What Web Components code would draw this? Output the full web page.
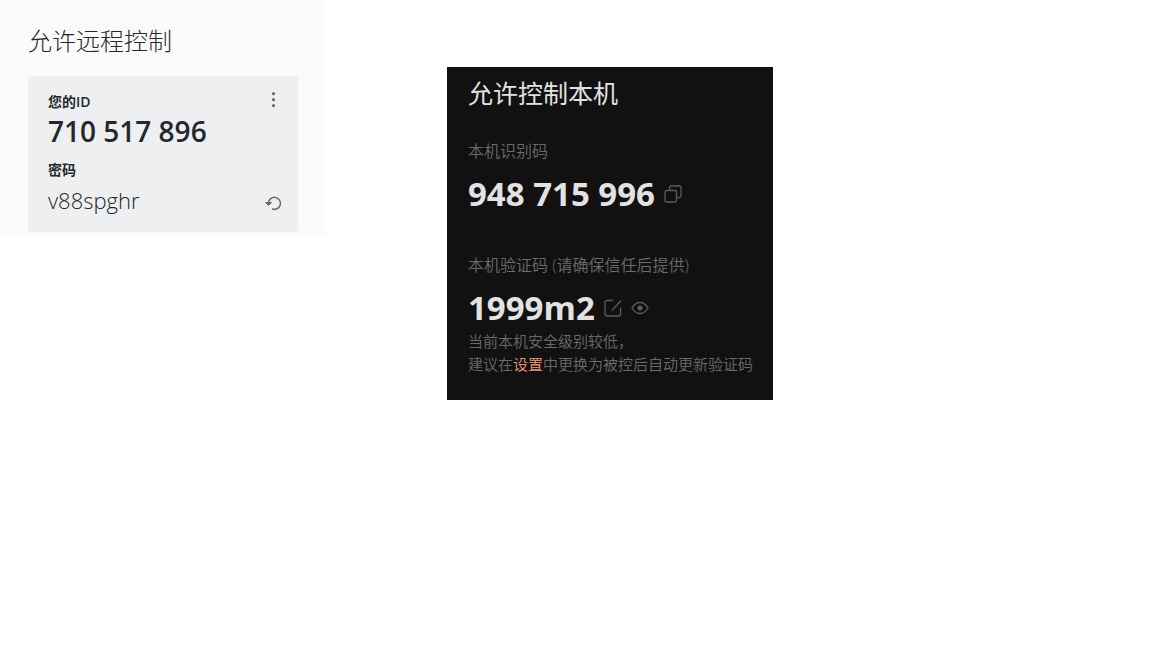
<!DOCTYPE html>
<html lang="zh-CN">
<head>
<meta charset="utf-8">
<meta name="viewport" content="width=device-width, initial-scale=1">
<title>允许远程控制</title>
<style>
  body { margin: 0; background: #fff; font-family: "Open Sans", "Noto Sans CJK SC", sans-serif; }
</style>
</head>
<body>
<remote-page>
  <light-panel slot="light" heading="允许远程控制">
    <id-card number="710 517 896" password="v88spghr"></id-card>
  </light-panel>
  <dark-panel slot="dark" heading="允许控制本机">
    <code-field label="本机识别码" value="948 715 996">
      <icon-button slot="actions" name="copy" label="复制"></icon-button>
    </code-field>
    <code-field label="本机验证码 (请确保信任后提供)" value="1999m2">
      <icon-button slot="actions" name="edit" label="编辑"></icon-button>
      <icon-button slot="actions" name="eye" label="显示"></icon-button>
    </code-field>
    <security-note slot="note"></security-note>
  </dark-panel>
</remote-page>
<script>
class Base extends HTMLElement {
  connectedCallback() {
    if (this.shadowRoot) return;
    this.attachShadow({ mode: 'open' }).innerHTML = this.render();
  }
  attr(name) { return this.getAttribute(name) || ''; }
}

customElements.define('remote-page', class extends Base {
  render() {
    return `<style>
      :host { display: block; }
      main { display: grid; grid-template-columns: 324fr 123fr 326fr 379fr; align-items: start; }
      slot[name=light] { display: block; grid-column: 1; }
      slot[name=dark] { display: block; grid-column: 3; padding-top: 67px; }
    </style>
    <main><slot name="light"></slot><slot name="dark"></slot></main>`;
  }
});

customElements.define('light-panel', class extends Base {
  render() {
    return `<style>
      :host { display: block; background: #fafafa; color: #23282c; padding: 23px 26px 3px 28px; }
      h1 { margin: 0 0 17px; font-size: 24px; line-height: 36px; font-weight: 300; white-space: nowrap; }
    </style>
    <h1>${this.attr('heading')}</h1><slot></slot>`;
  }
});

customElements.define('id-card', class extends Base {
  render() {
    return `<style>
      :host { display: block; background: #eeeff0; border-radius: 4px; padding: 16px 15px 14px 20px; color: #23282c; }
      dl { margin: 0; display: grid; grid-template-columns: 1fr auto; }
      dt { font-size: 14px; line-height: 20px; font-weight: 700; }
      dt span { font-weight: 600; }
      dd { margin: 0; line-height: 36px; white-space: nowrap; }
      .number { font-size: 28px; font-weight: 600; grid-column: 1 / -1; padding: 1px 0 11px; }
      .secret { font-size: 22px; font-weight: 300; grid-column: 1; padding-top: 2px; }
      dt.wide { grid-column: 1 / -1; }
      icon-button { color: #696b6d; align-self: start; }
      .refresh { align-self: center; padding-top: 8px; }
    </style>
    <dl>
      <dt>您的<span>ID</span></dt>
      <icon-button name="more" label="更多"></icon-button>
      <dd class="number">${this.attr('number')}</dd>
      <dt class="wide">密码</dt>
      <dd class="secret">${this.attr('password')}</dd>
      <icon-button class="refresh" name="refresh" label="刷新密码"></icon-button>
    </dl>`;
  }
});

customElements.define('dark-panel', class extends Base {
  render() {
    return `<style>
      :host { display: block; background: #111; color: #e2e2e2; padding: 8px 0 24px 21px; }
      h2 { margin: 0 0 28px; font-size: 25px; line-height: 36px; font-weight: 400; white-space: nowrap; }
      .fields { display: grid; gap: 37px; }
    </style>
    <h2>${this.attr('heading')}</h2>
    <div class="fields"><slot></slot></div>
    <slot name="note"></slot>`;
  }
});

customElements.define('code-field', class extends Base {
  render() {
    return `<style>
      :host { display: block; }
      .label { font-size: 16px; line-height: 24px; color: #6b6b6b; white-space: nowrap; font-weight: 350; }
      .row { display: flex; align-items: center; gap: 9px; padding-top: 9px; }
      .value { font-size: 33px; line-height: 44px; font-weight: 700; white-space: nowrap; }
      slot { display: contents; }
    </style>
    <div class="label">${this.attr('label')}</div>
    <div class="row"><span class="value">${this.attr('value')}</span><slot name="actions"></slot></div>`;
  }
});

customElements.define('security-note', class extends Base {
  render() {
    return `<style>
      :host { display: block; font-size: 15px; line-height: 23px; color: #6b6b6b; font-weight: 350; }
      p { margin: 0; white-space: nowrap; }
      a { color: #f29b7b; text-decoration: none; }
    </style>
    <p>当前本机安全级别较低，<br>建议在<a href="#settings">设置</a>中更换为被控后自动更新验证码</p>`;
  }
});

const ICONS = {
  more: '<g fill="currentColor" stroke="none"><circle cx="8.500" cy="1.700" r="1.600"/><circle cx="8.500" cy="7.700" r="1.600"/><circle cx="8.500" cy="13.700" r="1.600"/></g>',
  refresh: '<path d="M3.500 10.500V9.500a6 6 0 1 1 3.500 5.300" stroke-width="1.500"/><path d="M.6 8.600l2.900 2.800 3-2.800z" fill="currentColor" stroke-width="1"/>',
  copy: '<rect x="1" y="5.500" width="11.500" height="11.500" rx="1.500"/><path d="M5.500 5.500V2.500A1.500 1.500 0 0 1 7 1h8.500A1.500 1.500 0 0 1 17 2.500V11a1.500 1.500 0 0 1-1.500 1.500h-3"/>',
  edit: '<path d="M9 1.500H3a2 2 0 0 0-2 2V15a2 2 0 0 0 2 2h11.500a2 2 0 0 0 2-2V8.500M8 11.500l9-10"/>',
  eye: '<path d="M1 9c2.200-3.700 4.800-5.500 8-5.500s5.800 1.800 8 5.500c-2.200 3.700-4.800 5.500-8 5.500S3.200 12.700 1 9z"/><circle cx="9" cy="9" r="2.500" fill="currentColor" stroke="none"/>'
};

customElements.define('icon-button', class extends Base {
  render() {
    return `<style>
      :host { display: block; color: #5c5c5c; }
      button { display: block; margin: 0; padding: 0; border: 0; background: none; color: inherit; cursor: pointer; }
      svg { display: block; width: 18px; height: 18px; fill: none; stroke: currentColor; stroke-width: 1.3; }
    </style>
    <button type="button" aria-label="${this.attr('label')}"><svg viewBox="0 0 18 18" aria-hidden="true">${ICONS[this.attr('name')]}</svg></button>`;
  }
});
</script>
</body>
</html>
